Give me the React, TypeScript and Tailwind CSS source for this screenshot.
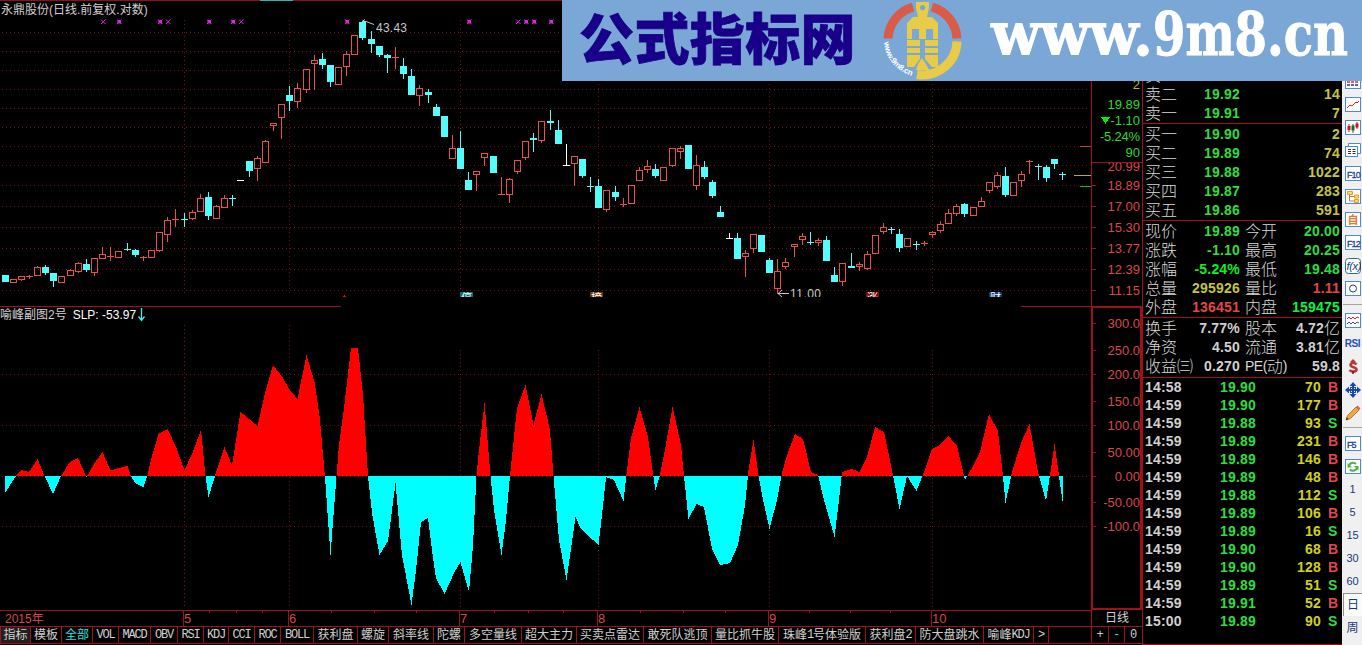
import type { ReactNode } from 'react';

type Kind = 'r' | 'c' | 'w';
// x, kind, high, top, bottom, low (all in thirds of a pixel)
type Candle = [number, Kind, number, number, number, number];

const CANDLES: Candle[] = [
  [16, 'c', 825, 825, 846, 846], [40, 'r', 838, 838, 848, 848], [64, 'r', 829, 829, 839, 842], [88, 'r', 826, 829, 832, 835],
  [112, 'r', 799, 802, 827, 827], [136, 'c', 795, 801, 819, 824], [160, 'c', 819, 819, 843, 860], [185, 'r', 829, 829, 848, 848],
  [211, 'r', 808, 811, 827, 827], [235, 'r', 787, 790, 815, 818], [259, 'c', 778, 792, 810, 813], [284, 'r', 775, 775, 818, 827],
  [307, 'r', 741, 763, 776, 776], [331, 'r', 741, 768, 770, 782], [355, 'r', 754, 754, 773, 773], [382, 'c', 730, 747, 749, 750],
  [406, 'c', 748, 751, 765, 770], [430, 'r', 768, 771, 775, 781], [454, 'r', 751, 751, 773, 773], [478, 'r', 697, 697, 752, 755],
  [502, 'r', 652, 661, 704, 725], [526, 'r', 628, 658, 662, 680], [553, 'c', 640, 657, 660, 680], [577, 'r', 630, 637, 656, 659],
  [601, 'r', 583, 595, 635, 635], [625, 'c', 576, 591, 648, 657], [649, 'r', 615, 619, 656, 656], [673, 'r', 586, 595, 623, 623],
  [697, 'c', 585, 595, 597, 617], [720, 'w', 540, 540, 543, 543], [748, 'c', 484, 484, 513, 530], [772, 'r', 468, 475, 506, 540],
  [796, 'r', 421, 424, 488, 488], [820, 'r', 370, 370, 377, 392], [844, 'r', 313, 313, 352, 416], [868, 'c', 259, 286, 303, 332],
  [892, 'r', 250, 265, 304, 323], [919, 'r', 208, 208, 268, 278], [943, 'r', 166, 181, 191, 269], [967, 'c', 160, 178, 195, 206],
  [991, 'c', 195, 195, 246, 258], [1015, 'r', 202, 202, 254, 254], [1039, 'r', 154, 163, 200, 227], [1063, 'r', 106, 106, 163, 163],
  [1087, 'c', 66, 66, 114, 117], [1114, 'c', 94, 118, 132, 158], [1138, 'c', 139, 139, 165, 170], [1162, 'c', 162, 166, 174, 218],
  [1186, 'r', 142, 172, 175, 206], [1210, 'c', 175, 198, 222, 234], [1234, 'c', 208, 228, 285, 285], [1258, 'r', 256, 265, 287, 317],
  [1285, 'c', 267, 277, 285, 308], [1309, 'c', 313, 321, 348, 348], [1333, 'c', 348, 348, 411, 411], [1357, 'r', 405, 445, 476, 476],
  [1381, 'c', 393, 445, 507, 507], [1405, 'c', 516, 541, 570, 570], [1429, 'r', 514, 514, 524, 570], [1453, 'r', 460, 460, 473, 497],
  [1480, 'c', 468, 468, 519, 519], [1504, 'r', 532, 582, 584, 584], [1528, 'r', 535, 538, 584, 608], [1552, 'r', 481, 481, 515, 519],
  [1576, 'r', 424, 424, 473, 479], [1600, 'c', 400, 415, 420, 453], [1624, 'r', 364, 364, 422, 428], [1651, 'c', 330, 364, 369, 387],
  [1675, 'c', 361, 390, 432, 432], [1699, 'w', 432, 495, 498, 498], [1723, 'r', 469, 469, 491, 557], [1747, 'c', 477, 477, 528, 531],
  [1771, 'c', 531, 558, 561, 575], [1795, 'c', 537, 558, 624, 624], [1819, 'r', 571, 571, 629, 635], [1846, 'c', 558, 576, 591, 602],
  [1870, 'r', 594, 612, 617, 620], [1895, 'r', 556, 556, 611, 611], [1918, 'r', 501, 511, 542, 542], [1942, 'r', 480, 499, 509, 518],
  [1966, 'c', 492, 507, 528, 531], [1990, 'r', 502, 502, 542, 542], [2017, 'r', 445, 445, 495, 500], [2041, 'r', 439, 445, 455, 476],
  [2065, 'c', 435, 435, 507, 507], [2089, 'r', 465, 496, 557, 569], [2113, 'c', 483, 501, 531, 534], [2137, 'c', 540, 546, 588, 591],
  [2161, 'c', 618, 636, 651, 651], [2188, 'w', 699, 714, 717, 717], [2212, 'c', 699, 714, 777, 777], [2236, 'r', 750, 760, 770, 828],
  [2260, 'r', 703, 703, 746, 758], [2284, 'c', 705, 705, 756, 756], [2308, 'c', 775, 780, 819, 819], [2332, 'r', 778, 814, 866, 880],
  [2356, 'r', 774, 787, 800, 804], [2383, 'r', 733, 733, 740, 770], [2407, 'r', 699, 709, 719, 734], [2431, 'c', 696, 726, 729, 732],
  [2455, 'r', 715, 722, 726, 735], [2479, 'c', 708, 720, 783, 783], [2503, 'c', 802, 825, 846, 846], [2527, 'r', 790, 790, 845, 857],
  [2554, 'c', 759, 798, 804, 804], [2578, 'r', 788, 792, 800, 810], [2602, 'r', 754, 763, 806, 809], [2626, 'r', 706, 706, 761, 761],
  [2650, 'r', 670, 682, 695, 700], [2674, 'c', 681, 687, 689, 701], [2698, 'c', 687, 702, 744, 753], [2722, 'r', 715, 715, 740, 740],
  [2749, 'c', 723, 732, 737, 747], [2773, 'r', 725, 730, 733, 737], [2797, 'r', 693, 697, 704, 712], [2821, 'r', 663, 673, 692, 697],
  [2845, 'r', 628, 640, 671, 671], [2869, 'r', 612, 619, 641, 647], [2893, 'c', 609, 612, 642, 648], [2920, 'r', 622, 622, 647, 647],
  [2944, 'r', 592, 604, 620, 620], [2968, 'r', 547, 547, 572, 578], [2992, 'r', 517, 526, 560, 564], [3016, 'c', 502, 528, 585, 588],
  [3040, 'r', 547, 547, 587, 587], [3064, 'r', 513, 523, 542, 558], [3088, 'r', 482, 485, 488, 520], [3115, 'c', 492, 498, 501, 537],
  [3139, 'c', 495, 502, 534, 543], [3163, 'c', 477, 477, 494, 506], [3187, 'c', 516, 523, 526, 537],
];

const SLP =
  '5,476 5,493 16,476 21,470 29,472 37.5,459 44.5,476 53,494 61,476 70,462 78,458 86.5,477 94,464 102.5,452 110.5,470.5 119,468 127.5,466 131,476 135,483 143.5,487 147,477 152,456 158.5,434 167.5,429 176,447 184.5,470 192,454 201,430 205.5,476 208.5,497 215,476 224.5,447 232,465.5 240.5,412 257.5,426 265,393 273,365 283,378 289,389 297.5,399 306.5,355 315,384 320,420 324,466 325,477 330.5,555 336.5,476 339,445 344,408 351,348 358,348 363,395 368,476 372,513 379.5,555 388,541 395.5,483 402,555 411.5,605 416,570 421,522 428,518 432,550 436,578 444.5,594 454,573 460.5,562 469,592 473,545 476.5,476 479,450 484.5,403 490.5,476 494,510 501.5,555 506,520 510,476 517,408 525.5,385 533.5,425 541.5,394 550,430 553.5,476 559,540 566.5,580 571,548 575.5,517 581,529 598.5,545 602,515 606,477 614,480 623.5,501 627,470 631,438 639.5,407 648,437 653,474 655.5,490 659.5,477 664,455 672.5,407 681,445 684,476 688.5,519 696.5,504 704,507 712,549 720,565 730,563 738,545 745,505 748.5,470 753.5,440 758,472 762,495 769.5,529 777,500 782,473 787,455 795,434 803,439 811,472 818,475 824,500 834.5,537 839,500 842,472 852,469 859.5,472 867,457 875,427 884,432 892,470 899.5,509 907,476 916.5,491 924,472 932,449 940,445 948.5,436 957,446 965,480 973,466 980,452 989,414 998,431 1003,476 1005.5,503 1012,472 1021,443 1029.5,424 1038,472 1046,501 1050,475 1054.5,444 1059,476 1063,504 1063,476';

const COLORS: Record<Kind, string> = { r: '#e85050', c: '#54fcfc', w: '#ffffff' };
const MONTH_X = [184, 289, 460, 598, 769, 932];
const PRICE_GRID = [32, 51, 70, 89, 108, 127, 146, 165, 185, 206, 227, 248, 269, 290];
const SUB_GRID = [374, 425, 526];

const MARKS: { x: number; bold: boolean }[] = [
  { x: 103, bold: false }, { x: 119, bold: true }, { x: 160, bold: true }, { x: 168, bold: false },
  { x: 209, bold: true }, { x: 233, bold: true }, { x: 241, bold: false }, { x: 347, bold: true },
  { x: 469, bold: true }, { x: 518, bold: false }, { x: 526, bold: true }, { x: 534, bold: true }, { x: 551, bold: true },
];

const TAGS = [
  { x: 460, fill: '#0a6e72', text: '停' },
  { x: 590, fill: '#6b3a08', text: '榜' },
  { x: 866, fill: '#7a0808', text: '涨' },
  { x: 989, fill: '#0a3a78', text: '财' },
];

function CandleShape({ data }: { data: Candle }) {
  const [x, kind, high, top, bottom, low] = data;
  const cx = Math.floor(x / 3);
  const [h, t, b, l] = [high, top, bottom, low].map((v) => Math.floor(v / 3));
  const color = COLORS[kind];
  const hollow = kind === 'r' && b - t > 1;
  return (
    <g fill={color}>
      {t > h && <rect x={cx} y={h} width={1} height={t - h} />}
      {l > b && <rect x={cx} y={b} width={1} height={l - b + 1} />}
      {hollow ? (
        <rect x={cx - 2.5} y={t + 0.5} width={6} height={b - t} fill="none" stroke={color} />
      ) : (
        <rect x={cx - 3} y={t} width={7} height={Math.max(1, b - t)} />
      )}
    </g>
  );
}

function PriceChart() {
  return (
    <svg width={1091} height={306} className="block" shapeRendering="crispEdges">
      <rect x={0} y={0} width={1091} height={1} fill="#8c1018" />
      <rect x={260} y={0} width={33} height={1} fill="#28b8b8" />
      <g stroke="#701414" strokeDasharray="1 3">
        {PRICE_GRID.map((y) => (
          <line key={y} x1={2} x2={1090} y1={y + 0.5} y2={y + 0.5} />
        ))}
        {MONTH_X.map((x) => (
          <line key={x} x1={x + 0.5} x2={x + 0.5} y1={20} y2={294} />
        ))}
      </g>
      {MARKS.map(({ x, bold }) => (
        <g key={x} stroke="#d828d8" shapeRendering="auto">
          <path d={`M${x - 2} 19.5l4.5 4.5M${x + 2.5} 19.5l-4.5 4.5`} />
          {bold && <rect x={x - 1} y={20.5} width={2.5} height={2.5} fill="#d828d8" />}
        </g>
      ))}
      {CANDLES.map((c) => (
        <CandleShape key={c[0]} data={c} />
      ))}
      <g stroke="#c8c8c8" fill="none" shapeRendering="auto">
        <path d="M362 21.5h4l8 3M362 21.5l3-2M789 293.5h-11M782 290l-4 3.5 4 3.5" />
      </g>
      <g fill="#c8c8c8" className="font-['Liberation_Sans'] text-[12px]">
        <text x={376} y={32} textLength={31}>43.43</text>
        <text x={790} y={298} textLength={31}>11.00</text>
      </g>
      {TAGS.map((tag) => (
        <g key={tag.x}>
          <rect x={tag.x} y={292} width={13} height={5} fill={tag.fill} />
          <text x={tag.x + 1} y={302} fill="#fff" className="font-['Noto_Sans_CJK_SC'] text-[11px]">{tag.text}</text>
        </g>
      ))}
      <path d="M344.5 295l2 2h-4z" fill="#f00" />
      <rect x={0} y={297} width={1091} height={9} fill="#000" />
      <rect x={1080} y={146} width={11} height={1} fill="#c83c3c" />
      <rect x={1074} y={175} width={17} height={1} fill="#b8a850" />
      <rect x={1080} y={186} width={11} height={1} fill="#18b818" />
    </svg>
  );
}

function SlpChart() {
  return (
    <svg width={1091} height={304} viewBox="0 306 1091 304" className="block" shapeRendering="crispEdges">
      <clipPath id="above"><rect x={0} y={306} width={1091} height={171} /></clipPath>
      <clipPath id="below"><rect x={0} y={476} width={1091} height={134} /></clipPath>
      <rect x={0} y={306} width={341} height={1} fill="#a01018" />
      <rect x={1021} y={306} width={70} height={1} fill="#a01018" />
      <g stroke="#701414" strokeDasharray="1 3">
        {SUB_GRID.map((y) => (
          <line key={y} x1={2} x2={1090} y1={y + 0.5} y2={y + 0.5} />
        ))}
        <line x1={2} x2={1090} y1={476.5} y2={476.5} />
        {MONTH_X.map((x, i) => (
          <line key={x} x1={x + 0.5} x2={x + 0.5} y1={i < 2 ? 325 : 350} y2={608} />
        ))}
      </g>
      <polygon points={SLP} fill="#f00" clipPath="url(#above)" />
      <polygon points={SLP} fill="#0ff" clipPath="url(#below)" />
    </svg>
  );
}

const PRICE_LABELS: [string, number][] = [
  ['18.89', 185], ['17.00', 206], ['15.30', 227], ['13.77', 248], ['12.39', 269], ['11.15', 290],
];
const SLP_LABELS: [string, number][] = [
  ['300.0', 323], ['250.0', 350], ['200.0', 374], ['150.0', 401], ['100.0', 425],
  ['50.00', 452], ['0.00', 476], ['-50.00', 502], ['-100.0', 526],
];

function Axis() {
  return (
    <svg width={51} height={610} className="block font-['Liberation_Sans'] text-[13px]" shapeRendering="crispEdges">
      <clipPath id="axisTop"><rect x={0} y={163} width={51} height={20} /></clipPath>
      <g textAnchor="end">
        <g fill="#30d830">
          <text x={49} y={89} fill="#b8b838">2</text>
          <text x={49} y={109}>19.89</text>
          <text x={49} y={125}>-1.10</text>
          <text x={49} y={141} textLength={40}>-5.24%</text>
          <text x={49} y={157}>90</text>
          <path d="M10 117h9l-4.5 7z" fill="#00f000" />
        </g>
        <g fill="#d84848">
          <text x={49} y={171} clipPath="url(#axisTop)">20.99</text>
          {[...PRICE_LABELS, ...SLP_LABELS].map(([label, y]) => (
            <text key={label} x={49} y={y + 5}>{label}</text>
          ))}
        </g>
      </g>
      <g fill="#a01018">
        {[...PRICE_LABELS, ...SLP_LABELS].map(([label, y]) => (
          <rect key={label} x={0} y={y} width={5} height={1} />
        ))}
        <rect x={0} y={0} width={1} height={306} />
        <rect x={0} y={162} width={51} height={1} />
        <rect x={0} y={306} width={51} height={2} />
        <rect x={0} y={306} width={2} height={304} />
        <rect x={0} y={608} width={51} height={2} />
        <rect x={49} y={306} width={2} height={304} />
      </g>
    </svg>
  );
}

const TABS: [string, string][] = [
  ['指标', 'w-[30px]'], ['模板', 'w-[31px]'], ['全部', 'w-[31px] text-[#28e0e8]'], ['VOL', 'w-[26px]'], ['MACD', 'w-[32px]'],
  ['OBV', 'w-[27px]'], ['RSI', 'w-[26px]'], ['KDJ', 'w-[25px]'], ['CCI', 'w-[26px]'], ['ROC', 'w-[26px]'], ['BOLL', 'w-[33px]'],
  ['获利盘', 'w-[44px]'], ['螺旋', 'w-[31px]'], ['斜率线', 'w-[45px]'], ['陀螺', 'w-[31px]'], ['多空量线', 'w-[57px]'],
  ['超大主力', 'w-[55px]'], ['买卖点雷达', 'w-[67px]'], ['敢死队逃顶', 'w-[68px]'], ['量比抓牛股', 'w-[67px]'],
  ['珠峰1号体验版', 'w-[87px]'], ['获利盘2', 'w-[50px]'], ['防大盘跳水', 'w-[68px]'], ['喻峰KDJ', 'w-[50px]'], ['>', 'w-[15px]'],
];

// Latin runs use a half-width cell, like the CJK bitmap fonts do
function TabLabel({ text }: { text: string }) {
  return (
    <>
      {text.split(/([A-Z0-9>]+)/).filter(Boolean).map((part, i) =>
        /^[A-Z0-9>]/.test(part) ? (
          <span key={i} className="font-['Liberation_Mono'] text-[12px] tracking-[-1.2px]">{part}</span>
        ) : (
          <span key={i}>{part}</span>
        ),
      )}
    </>
  );
}

const MONTHS: [string, string][] = [
  ['5', 'w-[105px]'], ['6', 'w-[171px]'], ['7', 'w-[138px]'], ['8', 'w-[171px]'], ['9', 'w-[163px]'], ['10', 'w-[160px]'],
];
const WEEK_TICKS = [209, 236, 262, 331, 374, 416, 494, 528, 563, 640, 683, 725, 809, 850, 890];

function TimeAxis() {
  return (
    <div className="relative flex h-[16px] border-t border-[#a01018] text-[13px] leading-[16px] text-[#d84848]">
      <svg width={1091} height={4} className="absolute top-0 left-0">
        {WEEK_TICKS.map((x) => (
          <rect key={x} x={x} y={0} width={1} height={2} fill="#a01018" />
        ))}
      </svg>
      <div className="w-[183px] pl-[5px] text-[12px]">2015年</div>
      {MONTHS.map(([label, width]) => (
        <div key={label} className={`${width} border-l border-[#a01018]`}>{label}</div>
      ))}
    </div>
  );
}

type Row = [string, string, string];
const SELLS: Row[] = [['卖三', '19.93', '6'], ['卖二', '19.92', '14'], ['卖一', '19.91', '7']];
const BUYS: Row[] = [
  ['买一', '19.90', '2'], ['买二', '19.89', '74'], ['买三', '19.88', '1022'], ['买四', '19.87', '283'], ['买五', '19.86', '591'],
];

const G = 'text-[#30dc40]';
const Y = 'text-[#c4c440]';
const R = 'text-[#e04848]';
const W = 'text-[#d0d0d0]';

type Stat = [string, string, string, string, string, string];
const STATS: Stat[] = [
  ['现价', '19.89', G, '今开', '20.00', G],
  ['涨跌', '-1.10', G, '最高', '20.25', G],
  ['涨幅', '-5.24%', 'text-[#10f020]', '最低', '19.48', G],
  ['总量', '295926', Y, '量比', '1.11', R],
  ['外盘', '136451', R, '内盘', '159475', 'text-[#10f040]'],
];
const CAPITAL: Stat[] = [
  ['换手', '7.77%', W, '股本', '4.72亿', W],
  ['净资', '4.50', W, '流通', '3.81亿', W],
  ['收益㈢', '0.270', W, 'PE(动)', '59.8', W],
];
const TRADES: [string, string, string, 'B' | 'S'][] = [
  ['14:58', '19.90', '70', 'B'], ['14:59', '19.90', '177', 'B'], ['14:59', '19.88', '93', 'S'], ['14:59', '19.89', '231', 'B'],
  ['14:59', '19.89', '146', 'B'], ['14:59', '19.89', '48', 'B'], ['14:59', '19.88', '112', 'S'], ['14:59', '19.89', '106', 'B'],
  ['14:59', '19.89', '16', 'S'], ['14:59', '19.90', '68', 'B'], ['14:59', '19.90', '128', 'B'], ['14:59', '19.89', '51', 'S'],
  ['14:59', '19.91', '52', 'B'], ['15:00', '19.89', '90', 'S'],
];

function Label({ children }: { children: ReactNode }) {
  return <span className="text-[16px] font-light tracking-normal text-[#d8d8d8]">{children}</span>;
}

function BookRow({ row }: { row: Row }) {
  const [label, price, volume] = row;
  return (
    <div className="flex h-[19px] items-center pr-[2px]">
      <Label>{label}</Label>
      <span className={`ml-auto w-[96px] ${G}`}>{price}</span>
      <span className={`w-[40px] text-right ${Y}`}>{volume}</span>
    </div>
  );
}

function StatRow({ row }: { row: Stat }) {
  const [l1, v1, c1, l2, v2, c2] = row;
  return (
    <div className="flex h-[19px] items-center pr-[2px]">
      <div className="flex w-[95px] items-center justify-between">
        <Label>{l1}</Label>
        <span className={c1}>{v1}</span>
      </div>
      <div className="ml-[5px] flex flex-1 items-center justify-between">
        {l2.startsWith('PE') ? (
          <span className="flex items-center font-normal tracking-[-0.5px] text-[#d8d8d8]">
            PE(<Label>动</Label>)
          </span>
        ) : (
          <Label>{l2}</Label>
        )}
        <span className={`flex items-center ${c2}`}>
          {v2.replace('亿', '')}
          {v2.endsWith('亿') && <Label>亿</Label>}
        </span>
      </div>
    </div>
  );
}

function Quotes() {
  return (
    <div className="flex h-[645px] w-[200px] flex-col border-l border-[#a01018] pt-[66px] font-['Liberation_Sans','Noto_Sans_CJK_SC',sans-serif] text-[14px] leading-[19px] font-bold tracking-[0.2px] whitespace-nowrap">
      <div className="border-b border-[#a01018] pl-[2px]">
        {SELLS.map((row) => <BookRow key={row[0]} row={row} />)}
      </div>
      <div className="border-b border-[#a01018] pt-[1px] pl-[2px]">
        {BUYS.map((row) => <BookRow key={row[0]} row={row} />)}
      </div>
      <div className="border-b border-[#a01018] pt-[1px] pl-[2px]">
        {STATS.map((row) => <StatRow key={row[0]} row={row} />)}
      </div>
      <div className="border-b border-[#a01018] pt-[1px] pb-[1px] pl-[2px]">
        {CAPITAL.map((row) => <StatRow key={row[0]} row={row} />)}
      </div>
      <div className="flex-1 border-b border-[#a01018] pl-[2px]">
        {TRADES.map(([time, price, volume, side], i) => (
          <div key={i} className="flex h-[18px] items-center">
            <span className={`w-[75px] ${W}`}>{time}</span>
            <span className={`w-[52px] ${G}`}>{price}</span>
            <span className="w-[49px] text-right text-[#d0d020]">{volume}</span>
            <span className={`ml-[7px] ${side === 'B' ? R : G}`}>{side}</span>
          </div>
        ))}
      </div>
    </div>
  );
}

function Frame({ children }: { children: ReactNode }) {
  return (
    <svg width={16} height={16} viewBox="0 0 16 16">
      <rect x={0.5} y={0.5} width={15} height={14} fill="#fff" stroke="#4a88d8" />
      {children}
    </svg>
  );
}

function Cell({ children }: { children: ReactNode }) {
  return <div className="flex h-[23px] shrink-0 items-center justify-center">{children}</div>;
}

function FKey({ label }: { label: string }) {
  return (
    <Frame>
      <text x={2} y={12} fontSize={9} letterSpacing={-0.9} fill="#1840a0" stroke="#1840a0" strokeWidth={0.3}>
        {label}
      </text>
    </Frame>
  );
}

function Toolbar() {
  return (
    <div className="flex h-[645px] w-[20px] flex-col bg-[#f0f0f0] pt-[70px] pl-px font-['Liberation_Sans','Noto_Sans_CJK_SC',sans-serif] text-[11px] text-[#183878]">
      <Cell>
        <Frame>
          <path d="M2 8h12" stroke="#d03040" strokeWidth={1.5} strokeDasharray="3 1" />
          <path d="M2 5h12M2 11h12" stroke="#303080" strokeWidth={1.5} strokeDasharray="3 1" />
        </Frame>
      </Cell>
      <Cell>
        <Frame>
          <path d="M2 11l3-3 2 1 4-4 1 1 2-2" stroke="#d02030" fill="none" />
        </Frame>
      </Cell>
      <Cell>
        <Frame>
          <path d="M4 4v8M12 2v7" stroke="#d01020" />
          <path d="M8 4v9" stroke="#107020" />
          <path d="M2.500 6h3v4h-3zM10.500 3.500h3v4h-3z" fill="#d01020" />
          <path d="M6.500 5.500h3v5h-3z" fill="#107020" />
        </Frame>
      </Cell>
      <Cell>
        <svg width={16} height={15} viewBox="0 0 16 15">
          <path d="M3.500 3V.500h12v10H13" fill="#fff" stroke="#4a88d8" />
          <rect x={0.5} y={3.500} width={12} height={10} fill="#fff" stroke="#4a88d8" />
          <path d="M3 6.500h8M3 8.500h8M3 10.500h8" stroke="#303050" strokeDasharray="3 1.500" />
        </svg>
      </Cell>
      <Cell><FKey label="F10" /></Cell>
      <Cell>
        <Frame>
          <path d="M4.500 5v7H9M4.500 7.500H9" stroke="#c08030" fill="none" />
          <path d="M2.500 2.500h5v3h-5zM9.500 6h4v3h-4zM9.500 10.500h4v3h-4z" fill="#ffd860" stroke="#e0a020" />
        </Frame>
      </Cell>
      <Cell>
        <Frame>
          <text x={2.500} y={12} fontSize={11} fontWeight={700} fill="#e07830">自</text>
        </Frame>
      </Cell>
      <Cell><FKey label="F12" /></Cell>
      <Cell>
        <svg width={16} height={16} viewBox="0 0 16 16">
          <rect x={0.5} y={0.5} width={15} height={15} rx={3} fill="#fff" stroke="#207090" />
          <text x={1.500} y={12} fontSize={11} fontStyle="italic" letterSpacing={-0.3} fill="#183878">f(x)</text>
        </svg>
      </Cell>
      <Cell>
        <Frame>
          <circle cx={8} cy={7.500} r={3.500} fill="none" stroke="#204080" />
        </Frame>
      </Cell>
      <div className="mt-[4px] mb-[4px] h-px shrink-0 bg-[#a8a898]" />
      <Cell>
        <Frame>
          <path d="M2 6l2-2 2 2 2-2 2 2 2-2 2 1" stroke="#d02030" fill="none" />
          <path d="M2 11l2-2 2 2 2-2 2 2 2-2 2 1" stroke="#3050c0" fill="none" />
        </Frame>
      </Cell>
      <Cell><span className="text-[10px] font-bold tracking-[-0.4px] text-[#2050b8]">RSI</span></Cell>
      <Cell>
        <svg width={14} height={16} viewBox="0 0 14 16">
          <path d="M10.500 5.500C9 3.500 4.500 3.500 4.500 6s6 2 6 4.500-5 3-7 .5" stroke="#b83838" strokeWidth={2.600} fill="none" />
          <path d="M4 3l3-3 3 3z" fill="#b83838" />
          <path d="M7 12v3" stroke="#702020" strokeWidth={1.500} />
        </svg>
      </Cell>
      <Cell>
        <svg width={16} height={16} viewBox="0 0 16 16" fill="#1848a8">
          <path d="M8 0l3.500 4h-7zM8 16l3.500-4h-7zM0 8l4-3.500v7zM16 8l-4-3.500v7z" />
          <path d="M8 4v8M4 8h8" stroke="#1848a8" strokeWidth={2} />
          <rect x={5.500} y={5.500} width={5} height={5} fill="none" stroke="#1848a8" />
        </svg>
      </Cell>
      <Cell>
        <svg width={16} height={16} viewBox="0 0 16 16">
          <path d="M1 15l1.500-4.500L11 2l3 3-8.500 8.500z" fill="#f0a838" stroke="#a06820" strokeWidth={0.8} />
          <path d="M11 2l1.500-1.500 3 3L14 5z" fill="#d86060" />
          <path d="M1 15l.8-2.400 1.600 1.600z" fill="#302010" />
        </svg>
      </Cell>
      <div className="mt-[3px] mb-[4px] h-px shrink-0 bg-[#a8a898]" />
      <Cell><FKey label="F5" /></Cell>
      <Cell>
        <Frame>
          <path d="M4 7a4 3.500 0 0 1 7-2M12 8.500a4 3.500 0 0 1-7 2" stroke="#50b040" strokeWidth={2} fill="none" />
          <path d="M2.500 4v4.500H7zM13.500 11.500V7H9z" fill="#50b040" />
        </Frame>
      </Cell>
      {['1', '5', '15', '30', '60'].map((n) => (
        <Cell key={n}>{n}</Cell>
      ))}
      <div className="flex h-[23px] shrink-0 items-center justify-center border-t border-l border-[#909090] bg-[#fafafa] text-[12px]">日</div>
      <div className="flex h-[23px] shrink-0 items-center justify-center text-[12px]">周</div>
    </div>
  );
}

function Banner() {
  return (
    <svg width={800} height={81} viewBox="562 0 800 81" className="absolute top-0 left-[562px] block">
      <rect x={562} y={0} width={800} height={81} fill="#7ba7d7" />
      <text x={579} y={59} fontSize={55} fontWeight={900} fill="#180088" stroke="#180088" strokeWidth={0.8} letterSpacing={0.4} className="font-['Noto_Sans_CJK_SC']">公式指标网</text>
      {/* coin logo */}
      <g fill="none" strokeWidth={9}>
        <path d="M888 38.500A34.500 34.500 0 0 1 913 7" stroke="#d85c48" />
        <path d="M932 7A34.500 34.500 0 0 1 957 38.500" stroke="#d85c48" />
        <path d="M957 41.500A34.500 34.500 0 0 1 917 74.500" stroke="#e8cc48" />
      </g>
      <path
        fill="#e8cc48"
        fillRule="evenodd"
        d="M916 2h13v6l-2 9h5l6 6v16h-5V29h-7v10h-7V29h-7v10h-5V23l6-6h5l-2-9zM922.500 5a2.700 2.700 0 1 0 .1 0zM907 40h13v6h-13zM925 40h13v6h-13zM907 48h13v5h-13zM925 48h13v5h-13zM907 55h13v4l-6 8h-7zM925 55h13v12h-6l-7-8zM918 64l4-6 4 6 3 6h-13z"
      />
      <path id="coinArc" d="M884 42Q886 68 917 78" fill="none" />
      <text fontSize={8} fontWeight={700} letterSpacing={-0.2} fill="#fff" className="font-['Liberation_Sans']">
        <textPath href="#coinArc">www.9m8.cn</textPath>
      </text>
      <g fill="#fff" stroke="#fff" strokeWidth={1} fontSize={60} fontWeight={700} className="font-['DejaVu_Serif']">
        <text x={991} y={55} textLength={162} lengthAdjust="spacingAndGlyphs">www.</text>
        <text x={1153} y={55} textLength={114} lengthAdjust="spacingAndGlyphs">9m8</text>
        <text x={1267} y={55} textLength={81} lengthAdjust="spacingAndGlyphs">.cn</text>
      </g>
    </svg>
  );
}

export default function App() {
  return (
    <div className="relative flex h-[645px] w-[1362px] overflow-hidden bg-black font-['Liberation_Sans','Noto_Sans_CJK_SC',sans-serif] text-[12px] text-[#d0d0d0]">
      <div className="flex w-[1142px] flex-col">
        <div className="flex">
          <div className="relative w-[1091px]">
            <PriceChart />
            <SlpChart />
            <div className="absolute top-[2px] left-px leading-[16px] whitespace-nowrap">永鼎股份(日线.前复权.对数)</div>
            <div className="absolute top-[307px] left-0 flex items-center leading-[16px] whitespace-nowrap">
              <span>喻峰副图2号</span>
              <span className="ml-[6px] text-white">SLP: -53.97</span>
              <svg width={9} height={14} className="ml-px">
                <path d="M4.500 0v12M1.500 8.500l3 4 3-4" stroke="#40f0f0" strokeWidth={1.300} fill="none" />
              </svg>
            </div>
          </div>
          <Axis />
        </div>
        <div className="flex">
          <div className="w-[1091px]">
            <TimeAxis />
            <div className="flex h-[18px] border-y border-l border-[#a01018] leading-[16px]">
              {TABS.map(([text, cls], i) => (
                <div key={text} className={`${cls} flex shrink-0 items-center justify-center border-r border-[#a01018] whitespace-nowrap ${i === 0 ? 'bg-[#202020]' : ''}`}>
                  <TabLabel text={text} />
                </div>
              ))}
            </div>
          </div>
          <div className="w-[51px] border-l border-[#a01018]">
            <div className="h-[16px] text-center leading-[16px]">日线</div>
            <div className="flex h-[18px] border-y border-[#a01018] text-center font-['Liberation_Mono'] text-[12px] leading-[16px]">
              <span className="w-[17px] border-r border-[#a01018]">+</span>
              <span className="w-[16px] border-r border-[#a01018] text-[#28e0e8]">-</span>
              <span className="flex-1">0</span>
            </div>
          </div>
        </div>
      </div>
      <Quotes />
      <Toolbar />
      <Banner />
    </div>
  );
}
